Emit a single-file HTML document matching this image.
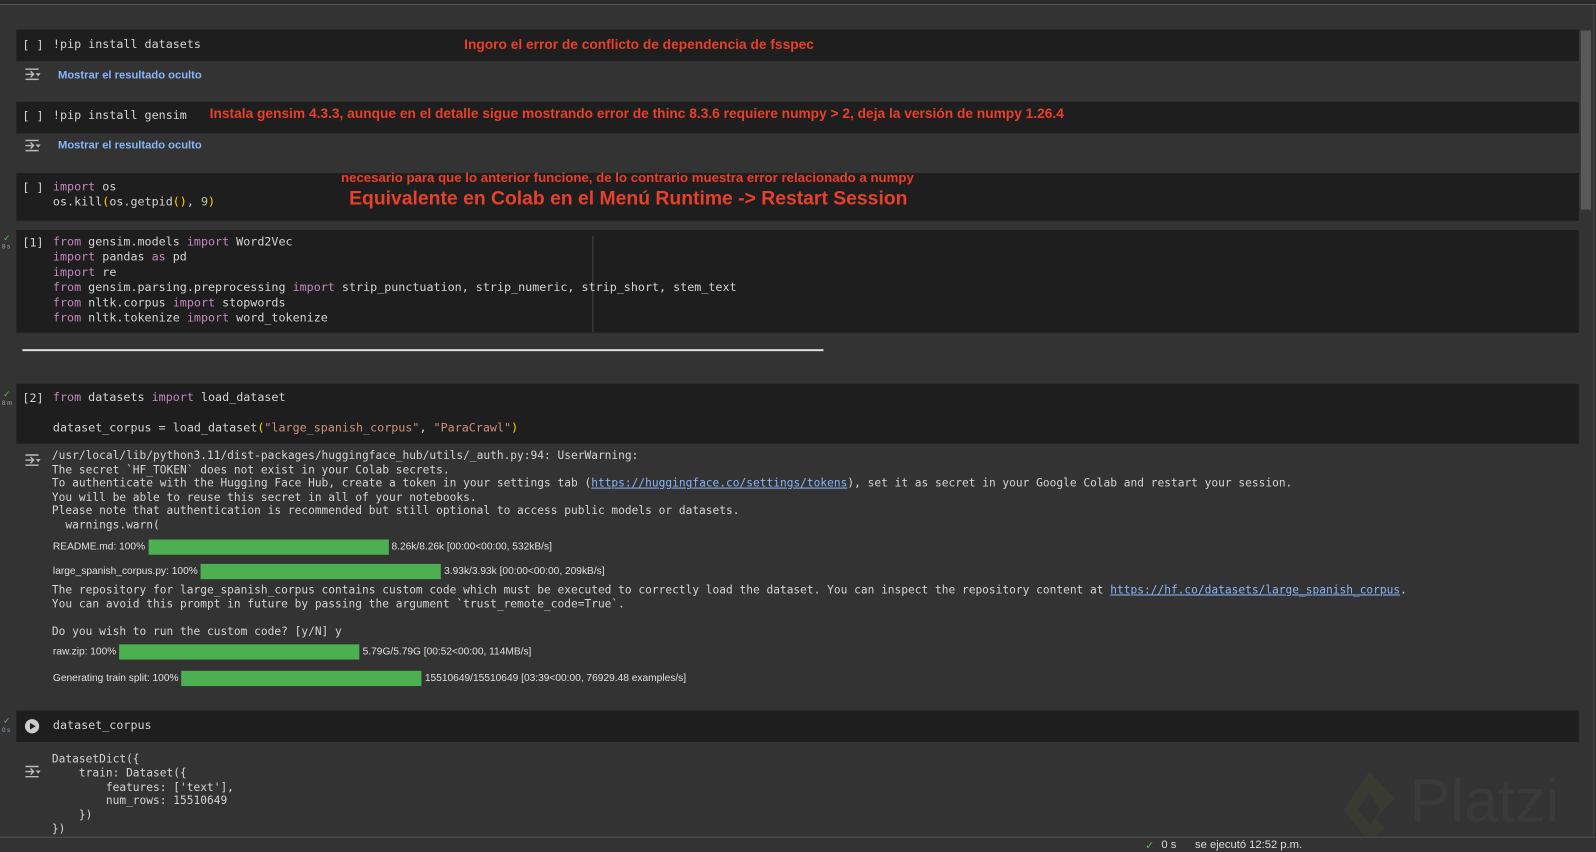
<!DOCTYPE html>
<html><head><meta charset="utf-8"><style>
*{margin:0;padding:0;box-sizing:border-box}
body{width:1596px;height:852px;background:#333333;position:relative;overflow:hidden;font-family:"DejaVu Sans Mono","Liberation Mono",monospace;color:#d4d4d4}
#w{position:absolute;left:0;top:0;width:1568px;height:837px;transform:scale(1.0179);transform-origin:0 0}
.a{position:absolute}
.cell{position:absolute;left:16px;width:1535px;background:#1e1e1e}
.code{position:absolute;left:52px;font-size:11.5px;line-height:15px;white-space:pre;color:#d4d4d4}
.br{position:absolute;left:22px;font-size:11.5px;color:#d4d4d4;white-space:pre}
.k{color:#c586c0}.s{color:#ce9178}.y{color:#ffd700}.n{color:#b5cea8}
.red{position:absolute;color:#e8402a;font-family:"Liberation Sans",sans-serif;font-weight:bold;white-space:nowrap}
.show{position:absolute;left:57px;color:#8ab4f8;font-family:"Liberation Sans",sans-serif;font-size:11px;font-weight:bold}
.out{position:absolute;left:51px;font-size:11px;line-height:13.6px;white-space:pre;color:#d4d4d4}
.pb{position:absolute;left:52px;font-family:"Liberation Sans",sans-serif;font-size:10px;color:#e0e0e0;white-space:nowrap;display:flex;align-items:center;gap:3px}
.bar{height:15px;background:#4caf50;display:inline-block}
.ic{position:absolute;left:24px;width:16px;height:12px}
.chk{position:absolute;left:3px;color:#5cb85c;font-size:9px;font-family:"Liberation Sans",sans-serif}
.tm{position:absolute;left:2px;color:#aaa;font-size:6px;font-family:"Liberation Sans",sans-serif}
u{color:#8ab4f8}
</style></head><body><div id="w">
<div class="a" style="left:0;top:0;width:1568px;height:5px;background:#2b2b2b;border-bottom:1px solid #555"></div>
<div class="a" style="left:1553px;top:30px;width:10px;height:176px;background:#595959"></div>
<div class="a" style="left:1565px;top:5px;width:1px;height:817px;background:#444"></div>

<svg width="0" height="0" style="position:absolute"><defs><symbol id="ico" viewBox="0 0 16 12"><path d="M1 1H14M1 11H14M1 6H9M6 3L9 6L6 9" stroke="#bbb" stroke-width="1.4" fill="none"/><path d="M11 5H16L13.5 8Z" fill="#bbb"/></symbol></defs></svg>

<div class="cell" style="top:29px;height:31px"></div>
<div class="br" style="top:37px">[ ]</div>
<div class="code" style="top:36px">!pip install datasets</div>
<div class="red" style="left:456px;top:36px;font-size:13.5px">Ingoro el error de  conflicto de dependencia de fsspec</div>
<svg class="ic" style="top:67px"><use href="#ico"/></svg>
<div class="show" style="top:68px">Mostrar el resultado oculto</div>

<div class="cell" style="top:100px;height:31px"></div>
<div class="br" style="top:107px">[ ]</div>
<div class="code" style="top:106px">!pip install gensim</div>
<div class="red" style="left:206px;top:104px;font-size:13.5px">Instala gensim 4.3.3, aunque en el detalle sigue mostrando error de thinc 8.3.6 requiere numpy &gt; 2, deja la versión de numpy 1.26.4</div>
<svg class="ic" style="top:137px"><use href="#ico"/></svg>
<div class="show" style="top:137px">Mostrar el resultado oculto</div>

<div class="cell" style="top:170px;height:47px"></div>
<div class="br" style="top:177px">[ ]</div>
<div class="code" style="top:176px"><span class="k">import</span> os
os.kill<span class="y">(</span>os.getpid<span class="y">()</span>, <span class="n">9</span><span class="y">)</span></div>
<div class="red" style="left:335px;top:167px;font-size:13px">necesario para que lo anterior funcione, de lo contrario muestra error relacionado a numpy</div>
<div class="red" style="left:343px;top:185px;font-size:19px">Equivalente en Colab en el Menú Runtime -&gt; Restart Session</div>

<div class="chk" style="top:229px">✓</div><div class="tm" style="top:240px">8 s</div>
<div class="cell" style="top:226px;height:101px"></div>
<div class="a" style="left:582px;top:232px;width:1px;height:94px;background:#444"></div>
<div class="br" style="top:231px">[1]</div>
<div class="code" style="top:230px"><span class="k">from</span> gensim.models <span class="k">import</span> Word2Vec
<span class="k">import</span> pandas <span class="k">as</span> pd
<span class="k">import</span> re
<span class="k">from</span> gensim.parsing.preprocessing <span class="k">import</span> strip_punctuation, strip_numeric, strip_short, stem_text
<span class="k">from</span> nltk.corpus <span class="k">import</span> stopwords
<span class="k">from</span> nltk.tokenize <span class="k">import</span> word_tokenize</div>

<div class="a" style="left:22px;top:343px;width:787px;height:2px;background:#ddd"></div>

<div class="chk" style="top:382px">✓</div><div class="tm" style="top:394px">8 m</div>
<div class="cell" style="top:377px;height:59px"></div>
<div class="br" style="top:384px">[2]</div>
<div class="code" style="top:383px"><span class="k">from</span> datasets <span class="k">import</span> load_dataset

dataset_corpus = load_dataset<span class="y">(</span><span class="s">"large_spanish_corpus"</span>, <span class="s">"ParaCrawl"</span><span class="y">)</span></div>
<svg class="ic" style="top:446px"><use href="#ico"/></svg>
<div class="out" style="top:441px">/usr/local/lib/python3.11/dist-packages/huggingface_hub/utils/_auth.py:94: UserWarning: 
The secret `HF_TOKEN` does not exist in your Colab secrets.
To authenticate with the Hugging Face Hub, create a token in your settings tab (<u>https://huggingface.co/settings/tokens</u>), set it as secret in your Google Colab and restart your session.
You will be able to reuse this secret in all of your notebooks.
Please note that authentication is recommended but still optional to access public models or datasets.
  warnings.warn(</div>
<div class="pb" style="top:530px">README.md: 100% <span class="bar" style="width:236px"></span> 8.26k/8.26k [00:00&lt;00:00, 532kB/s]</div>
<div class="pb" style="top:554px">large_spanish_corpus.py: 100% <span class="bar" style="width:236px"></span> 3.93k/3.93k [00:00&lt;00:00, 209kB/s]</div>
<div class="out" style="top:573px">The repository for large_spanish_corpus contains custom code which must be executed to correctly load the dataset. You can inspect the repository content at <u>https://hf.co/datasets/large_spanish_corpus</u>.
You can avoid this prompt in future by passing the argument `trust_remote_code=True`.

Do you wish to run the custom code? [y/N] y</div>
<div class="pb" style="top:633px">raw.zip: 100% <span class="bar" style="width:236px"></span> 5.79G/5.79G [00:52&lt;00:00, 114MB/s]</div>
<div class="pb" style="top:659px">Generating train split: 100% <span class="bar" style="width:236px"></span> 15510649/15510649 [03:39&lt;00:00, 76929.48 examples/s]</div>

<div class="chk" style="top:703px">✓</div><div class="tm" style="top:715px">0 s</div>
<div class="cell" style="top:698px;height:31px"></div>
<svg class="a" style="left:24px;top:706px" width="15" height="15"><circle cx="7.5" cy="7.5" r="7" fill="#ccc"/><path d="M5.5 4.2V10.8L11 7.5Z" fill="#1e1e1e"/></svg>
<div class="code" style="top:705px">dataset_corpus</div>
<svg class="ic" style="top:752px"><use href="#ico"/></svg>
<div class="out" style="top:739px;line-height:13.8px">DatasetDict({
    train: Dataset({
        features: ['text'],
        num_rows: 15510649
    })
})</div>

<svg class="a" style="left:1310px;top:752px" width="70" height="80"><path d="M35 6L60 32L42 52L50 62L36 76L10 44Z M35 26L24 44L36 58L46 44Z" fill="#3a3b30" fill-rule="evenodd"/></svg>
<div class="a" style="left:1385px;top:752px;font-family:'Liberation Sans',sans-serif;font-size:60px;color:#3a3a3a">Platzi</div>

<div class="a" style="left:0;top:822px;width:1568px;height:1px;background:#555"></div>
<div class="a" style="left:0;top:823px;width:1568px;height:14px;background:#333"></div>
<div class="a" style="left:1125px;top:824px;font-family:'Liberation Sans',sans-serif;font-size:11px;color:#5cb85c">✓</div>
<div class="a" style="left:1141px;top:824px;font-family:'Liberation Sans',sans-serif;font-size:11px;color:#ddd;white-space:pre">0 s      se ejecutó 12:52 p.m.</div>
</div></body></html>
